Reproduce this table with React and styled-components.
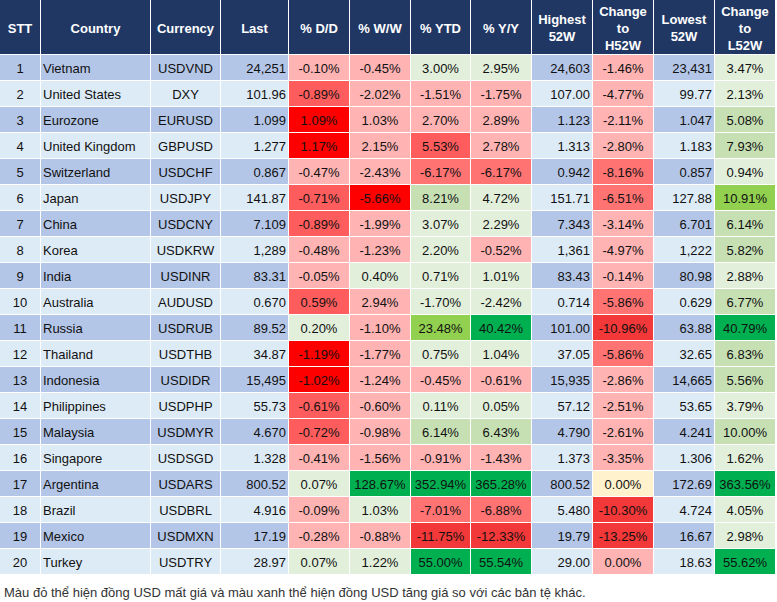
import React from 'react'
import styled, { createGlobalStyle } from 'styled-components'

const GlobalStyle = createGlobalStyle`
  html, body { margin: 0; padding: 0; background: #ffffff; }
  body { font-family: "Liberation Sans", Arial, sans-serif; }
`

const fills = {
  r1: '#FFB3B3',
  r2: '#FF7373',
  r3: '#FF5D5D',
  r4: '#FF0000',
  r5: '#F23838',
  g1: '#E2EFDA',
  g2: '#C6E0B4',
  g3: '#92D050',
  g4: '#00B050',
  y: '#FFF2CC',
}

const headers = ['STT', 'Country', 'Currency', 'Last', '% D/D', '% W/W', '% YTD', '% Y/Y', 'Highest\n52W', 'Change\nto\nH52W', 'Lowest\n52W', 'Change\nto\nL52W']

// country, currency, last, [dd, ww, ytd, yy], highest, changeH, lowest, changeL
const rows = [
  ['Vietnam', 'USDVND', '24,251', ['-0.10%', 'r1'], ['-0.45%', 'r1'], ['3.00%', 'g1'], ['2.95%', 'g1'], '24,603', ['-1.46%', 'r1'], '23,431', ['3.47%', 'g1']],
  ['United States', 'DXY', '101.96', ['-0.89%', 'r3'], ['-2.02%', 'r1'], ['-1.51%', 'r1'], ['-1.75%', 'r1'], '107.00', ['-4.77%', 'r1'], '99.77', ['2.13%', 'g1']],
  ['Eurozone', 'EURUSD', '1.099', ['1.09%', 'r4'], ['1.03%', 'r1'], ['2.70%', 'r1'], ['2.89%', 'r1'], '1.123', ['-2.11%', 'r1'], '1.047', ['5.08%', 'g2']],
  ['United Kingdom', 'GBPUSD', '1.277', ['1.17%', 'r4'], ['2.15%', 'r1'], ['5.53%', 'r3'], ['2.78%', 'r1'], '1.313', ['-2.80%', 'r1'], '1.183', ['7.93%', 'g2']],
  ['Switzerland', 'USDCHF', '0.867', ['-0.47%', 'r1'], ['-2.43%', 'r1'], ['-6.17%', 'r2'], ['-6.17%', 'r2'], '0.942', ['-8.16%', 'r2'], '0.857', ['0.94%', 'g1']],
  ['Japan', 'USDJPY', '141.87', ['-0.71%', 'r3'], ['-5.66%', 'r4'], ['8.21%', 'g2'], ['4.72%', 'g1'], '151.71', ['-6.51%', 'r2'], '127.88', ['10.91%', 'g3']],
  ['China', 'USDCNY', '7.109', ['-0.89%', 'r3'], ['-1.99%', 'r1'], ['3.07%', 'g1'], ['2.29%', 'g1'], '7.343', ['-3.14%', 'r1'], '6.701', ['6.14%', 'g2']],
  ['Korea', 'USDKRW', '1,289', ['-0.48%', 'r1'], ['-1.23%', 'r1'], ['2.20%', 'g1'], ['-0.52%', 'r1'], '1,361', ['-4.97%', 'r1'], '1,222', ['5.82%', 'g2']],
  ['India', 'USDINR', '83.31', ['-0.05%', 'r1'], ['0.40%', 'g1'], ['0.71%', 'g1'], ['1.01%', 'g1'], '83.43', ['-0.14%', 'r1'], '80.98', ['2.88%', 'g1']],
  ['Australia', 'AUDUSD', '0.670', ['0.59%', 'r3'], ['2.94%', 'r1'], ['-1.70%', 'g1'], ['-2.42%', 'g1'], '0.714', ['-5.86%', 'r2'], '0.629', ['6.77%', 'g2']],
  ['Russia', 'USDRUB', '89.52', ['0.20%', 'g1'], ['-1.10%', 'r1'], ['23.48%', 'g3'], ['40.42%', 'g4'], '101.00', ['-10.96%', 'r5'], '63.88', ['40.79%', 'g4']],
  ['Thailand', 'USDTHB', '34.87', ['-1.19%', 'r4'], ['-1.77%', 'r1'], ['0.75%', 'g1'], ['1.04%', 'g1'], '37.05', ['-5.86%', 'r2'], '32.65', ['6.83%', 'g2']],
  ['Indonesia', 'USDIDR', '15,495', ['-1.02%', 'r4'], ['-1.24%', 'r1'], ['-0.45%', 'r1'], ['-0.61%', 'r1'], '15,935', ['-2.86%', 'r1'], '14,665', ['5.56%', 'g2']],
  ['Philippines', 'USDPHP', '55.73', ['-0.61%', 'r3'], ['-0.60%', 'r1'], ['0.11%', 'g1'], ['0.05%', 'g1'], '57.12', ['-2.51%', 'r1'], '53.65', ['3.79%', 'g1']],
  ['Malaysia', 'USDMYR', '4.670', ['-0.72%', 'r3'], ['-0.98%', 'r1'], ['6.14%', 'g2'], ['6.43%', 'g2'], '4.790', ['-2.61%', 'r1'], '4.241', ['10.00%', 'g2']],
  ['Singapore', 'USDSGD', '1.328', ['-0.41%', 'r1'], ['-1.56%', 'r1'], ['-0.91%', 'r1'], ['-1.43%', 'r1'], '1.373', ['-3.35%', 'r1'], '1.306', ['1.62%', 'g1']],
  ['Argentina', 'USDARS', '800.52', ['0.07%', 'g1'], ['128.67%', 'g4'], ['352.94%', 'g4'], ['365.28%', 'g4'], '800.52', ['0.00%', 'y'], '172.69', ['363.56%', 'g4']],
  ['Brazil', 'USDBRL', '4.916', ['-0.09%', 'r1'], ['1.03%', 'g1'], ['-7.01%', 'r2'], ['-6.88%', 'r2'], '5.480', ['-10.30%', 'r5'], '4.724', ['4.05%', 'g1']],
  ['Mexico', 'USDMXN', '17.19', ['-0.28%', 'r1'], ['-0.88%', 'r1'], ['-11.75%', 'r5'], ['-12.33%', 'r5'], '19.79', ['-13.25%', 'r5'], '16.67', ['2.98%', 'g1']],
  ['Turkey', 'USDTRY', '28.97', ['0.07%', 'g1'], ['1.22%', 'g1'], ['55.00%', 'g4'], ['55.54%', 'g4'], '29.00', ['0.00%', 'r1'], '18.63', ['55.62%', 'g4']],
]

export default function App() {
  return (
    <>
      <GlobalStyle />
      <Page>
        <Table>
          {headers.map((h) => (
            <HeadCell key={h}>{h}</HeadCell>
          ))}
          {rows.map((r, i) => {
            const stripe = i % 2 === 0 ? '#B4C6E7' : '#DDEBF7'
            const [country, cur, last, dd, ww, ytd, yy, hi, chH, lo, chL] = r
            return (
              <React.Fragment key={country}>
                <Cell bg={stripe} align="center">{i + 1}</Cell>
                <Cell bg={stripe} align="left">{country}</Cell>
                <Cell bg={stripe} align="center">{cur}</Cell>
                <Cell bg={stripe} align="right">{last}</Cell>
                {[dd, ww, ytd, yy].map(([v, c], k) => (
                  <Cell key={k} bg={fills[c]} align="center">{v}</Cell>
                ))}
                <Cell bg={stripe} align="right">{hi}</Cell>
                <Cell bg={fills[chH[1]]} align="center">{chH[0]}</Cell>
                <Cell bg={stripe} align="right">{lo}</Cell>
                <Cell bg={fills[chL[1]]} align="center">{chL[0]}</Cell>
              </React.Fragment>
            )
          })}
        </Table>
        <Note>Màu đỏ thể hiện đồng USD mất giá và màu xanh thể hiện đồng USD tăng giá so với các bản tệ khác.</Note>
      </Page>
    </>
  )
}

const Page = styled.div`
  width: 777px;
  background: #ffffff;
`

const Table = styled.div`
  display: grid;
  grid-template-columns: 40px 109px 69px 67px 60px 60px 59px 60px 60px 60px 60px 60px;
  grid-template-rows: 54px;
  grid-auto-rows: 25px;
  gap: 1px;
  background: #ffffff;
  width: 775px;
`

const HeadCell = styled.div`
  background: #203764;
  color: #ffffff;
  font-weight: bold;
  font-size: 13px;
  line-height: 17px;
  padding-top: 2px;
  white-space: pre-line;
  display: flex;
  align-items: center;
  justify-content: center;
  text-align: center;
`

const Cell = styled.div`
  background: ${(p) => p.bg};
  color: #111111;
  font-size: 13px;
  display: flex;
  align-items: center;
  justify-content: ${(p) => (p.align === 'left' ? 'flex-start' : p.align === 'right' ? 'flex-end' : 'center')};
  padding: 2px 2px 0;
  white-space: nowrap;
  overflow: hidden;
`

const Note = styled.div`
  font-size: 13px;
  color: #333333;
  padding: 11px 0 0 4px;
  white-space: nowrap;
`
